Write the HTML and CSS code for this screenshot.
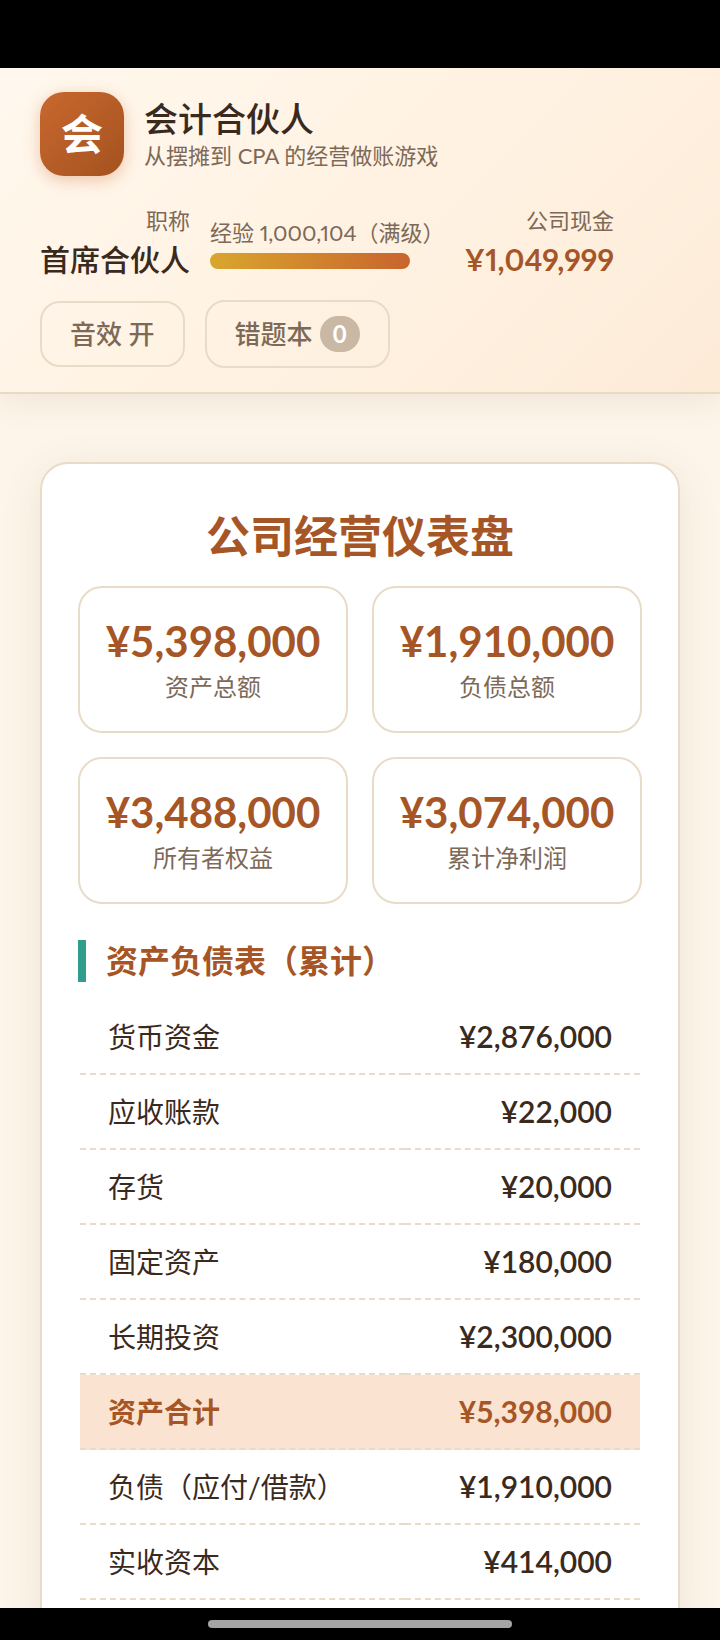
FILE: index.html
```html
<!DOCTYPE html>
<html lang="zh-CN">
<head>
<meta charset="utf-8">
<meta name="viewport" content="width=device-width, initial-scale=1">
<title>会计合伙人</title>
<link rel="stylesheet" href="styles.css">
</head>
<body>
<div class="status-bar"></div>
<header class="topbar">
  <div class="brand">
    <div class="brand-logo">会</div>
    <div>
      <h1 class="brand-title">会计合伙人</h1>
      <p class="brand-sub">从摆摊到 CPA 的经营做账游戏</p>
    </div>
  </div>
  <div class="player">
    <div class="player-stat">
      <span class="label">职称</span>
      <strong class="value">首席合伙人</strong>
    </div>
    <div class="exp">
      <span class="label" id="exp-label">经验 1,000,104（满级）</span>
      <div class="exp-bar" role="progressbar" aria-labelledby="exp-label" aria-valuenow="100"><div class="exp-fill"></div></div>
    </div>
    <div class="player-stat">
      <span class="label">公司现金</span>
      <strong class="value cash">¥1,049,999</strong>
    </div>
  </div>
  <div class="actions">
    <button class="btn" type="button">音效 开</button>
    <button class="btn" type="button">错题本<span class="badge">0</span></button>
  </div>
</header>
<main class="content">
  <section class="card">
    <h2 class="card-title">公司经营仪表盘</h2>
    <div class="metrics">
      <div class="metric"><strong class="metric-value">¥5,398,000</strong><span class="metric-label">资产总额</span></div>
      <div class="metric"><strong class="metric-value">¥1,910,000</strong><span class="metric-label">负债总额</span></div>
      <div class="metric"><strong class="metric-value">¥3,488,000</strong><span class="metric-label">所有者权益</span></div>
      <div class="metric"><strong class="metric-value">¥3,074,000</strong><span class="metric-label">累计净利润</span></div>
    </div>
    <h3 class="section-title" id="sheet-title">资产负债表（累计）</h3>
    <div class="sheet-wrap">
      <table class="sheet" aria-labelledby="sheet-title">
        <tbody>
          <tr><th scope="row">货币资金</th><td>¥2,876,000</td></tr>
          <tr><th scope="row">应收账款</th><td>¥22,000</td></tr>
          <tr><th scope="row">存货</th><td>¥20,000</td></tr>
          <tr><th scope="row">固定资产</th><td>¥180,000</td></tr>
          <tr><th scope="row">长期投资</th><td>¥2,300,000</td></tr>
          <tr class="total"><th scope="row">资产合计</th><td>¥5,398,000</td></tr>
          <tr><th scope="row">负债（应付/借款）</th><td>¥1,910,000</td></tr>
          <tr><th scope="row">实收资本</th><td>¥414,000</td></tr>
        </tbody>
      </table>
    </div>
  </section>
</main>
<div class="nav-bar"><div class="nav-handle"></div></div>
</body>
</html>
```

FILE: styles.css
```css
:root {
  --ink: #3a2a1e;
  --muted: #7d6957;
  --accent: #a65626;
  --line: #e8dbc8;
}

* {
  box-sizing: border-box;
}

body {
  margin: 0;
  height: 100vh;
  display: flex;
  flex-direction: column;
  overflow: hidden;
  background: #fdf5ea;
  color: var(--ink);
  font-family: Lato, "Noto Sans CJK SC", sans-serif;
}

h1, h2, h3, p {
  margin: 0;
}

.status-bar {
  flex: none;
  position: relative;
  z-index: 2;
  height: 68px;
  background: #000;
}

.topbar {
  flex: none;
  position: relative;
  z-index: 1;
  display: flex;
  flex-direction: column;
  gap: 20px;
  padding: 24px 40px;
  border-bottom: 2px solid #e9dac5;
  background: linear-gradient(135deg, #fff8ee 0%, #fff2e2 50%, #fdebd8 100%);
  box-shadow: 0 4px 32px rgba(120, 90, 50, 0.12);
}

.brand {
  display: flex;
  align-items: center;
  gap: 20px;
}

.brand-logo {
  display: grid;
  place-items: center;
  width: 84px;
  height: 84px;
  border-radius: 24px;
  background: linear-gradient(135deg, #c8682f, #a4521f);
  box-shadow: 0 4px 16px rgba(200, 104, 47, 0.35);
  color: #fff;
  font-size: 42px;
  font-weight: 700;
  line-height: 60px;
}

.brand-title {
  font-size: 34px;
  font-weight: 500;
  line-height: 44px;
}

.brand-sub {
  color: var(--muted);
  font-size: 22px;
  line-height: 30px;
}

.player {
  display: flex;
  align-items: center;
  gap: 20px;
  padding-top: 8px;
  font-variant-numeric: proportional-nums;
}

.player-stat {
  display: flex;
  flex-direction: column;
  align-items: flex-end;
}

.label {
  color: var(--muted);
  font-size: 22px;
  line-height: 34px;
  white-space: nowrap;
}

.value {
  font-size: 30px;
  font-weight: 500;
  line-height: 42px;
  white-space: nowrap;
}

.cash {
  color: var(--accent);
  font-weight: 700;
}

.exp {
  display: flex;
  flex-direction: column;
  gap: 3px;
}

.exp-bar {
  width: 200px;
  height: 16px;
  border-radius: 8px;
  background: var(--line);
  overflow: hidden;
}

.exp-fill {
  height: 100%;
  background: linear-gradient(90deg, #d9a62e, #c8642d);
}

.actions {
  display: flex;
  align-items: center;
  gap: 20px;
}

.btn {
  display: flex;
  align-items: center;
  gap: 7px;
  padding: 14px 28px;
  border: 2px solid var(--line);
  border-radius: 20px;
  background: transparent;
  color: var(--muted);
  font-family: inherit;
  font-size: 26px;
  font-weight: 500;
  line-height: 34px;
}

.badge {
  min-width: 40px;
  border-radius: 18px;
  background: #c8b8a4;
  color: #fff;
  font-size: 24px;
  font-weight: 700;
  line-height: 36px;
  text-align: center;
}

.content {
  flex: 1;
  min-height: 0;
  overflow: hidden;
  padding: 68px 40px 0;
}

.card {
  padding: 36px;
  border: 2px solid var(--line);
  border-radius: 28px;
  background: #fff;
  box-shadow: 0 8px 40px rgba(120, 90, 50, 0.1);
}

.card-title {
  margin-bottom: 14px;
  color: var(--accent);
  font-size: 44px;
  font-weight: 700;
  line-height: 72px;
  text-align: center;
}

.metrics {
  display: grid;
  grid-template-columns: 1fr 1fr;
  gap: 24px;
}

.metric {
  display: flex;
  flex-direction: column;
  align-items: center;
  padding: 28px 0 24px;
  border: 2px solid var(--line);
  border-radius: 24px;
}

.metric-value {
  color: var(--accent);
  font-size: 42px;
  font-weight: 700;
  line-height: 51px;
}

.metric-label {
  color: var(--muted);
  font-size: 24px;
  line-height: 40px;
}

.section-title {
  margin: 36px 0 18px;
  padding-left: 20px;
  border-left: 8px solid #2f9e8c;
  color: var(--accent);
  font-size: 32px;
  font-weight: 700;
  line-height: 42px;
}

.sheet-wrap {
  padding: 0 2px;
}

.sheet {
  width: 100%;
  border-spacing: 0;
}

.sheet th,
.sheet td {
  height: 75px;
  padding: 0 28px 2px;
  border-bottom: 2px dashed var(--line);
}

.sheet th {
  width: 58%;
  font-size: 28px;
  font-weight: 400;
  text-align: left;
}

.sheet td {
  font-size: 30px;
  font-weight: 600;
  text-align: right;
}

.sheet .total th,
.sheet .total td {
  background: #fbe3d1;
  color: var(--accent);
  font-weight: 700;
}

.nav-bar {
  flex: none;
  position: relative;
  z-index: 1;
  display: grid;
  place-items: center;
  height: 32px;
  background: #000;
}

.nav-handle {
  width: 304px;
  height: 8px;
  border-radius: 4px;
  background: #a5a5a5;
}
```
